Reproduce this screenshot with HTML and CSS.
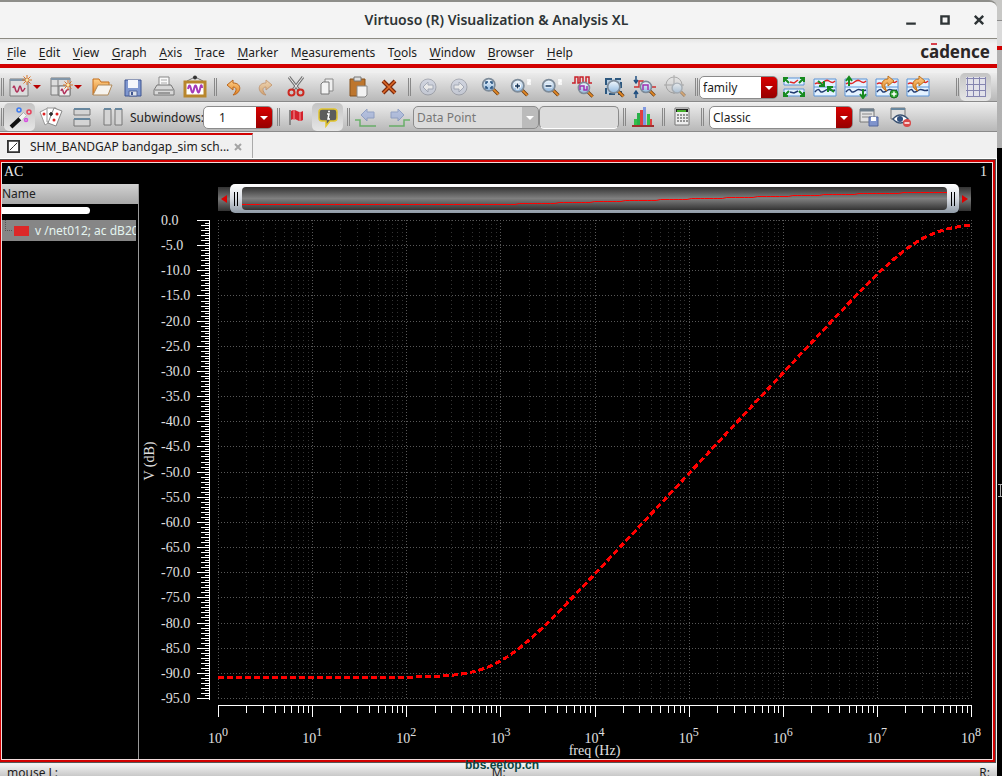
FILE: index.html
```html
<!DOCTYPE html>
<html lang="en">
<head>
<meta charset="UTF-8">
<meta name="viewport" content="width=device-width, initial-scale=1.0">
<title>Virtuoso (R) Visualization &amp; Analysis XL</title>
<link rel="stylesheet" href="styles.css">
</head>
<body>

<svg class="defs" aria-hidden="true">
  <defs>
    <linearGradient id="lens" x1="0" y1="0" x2="0" y2="1"><stop offset="0" stop-color="#f4faff"/><stop offset="1" stop-color="#8fb6dc"/></linearGradient>
    <linearGradient id="gold" x1="0" y1="0" x2="0" y2="1"><stop offset="0" stop-color="#ffd08a"/><stop offset="1" stop-color="#e08020"/></linearGradient>
    <symbol id="magnifier" viewBox="0 0 24 24">
      <path d="M15 15l6 6" stroke="#6b3c10" stroke-width="4"/><path d="M15 15l6 6" stroke="#e48a28" stroke-width="2"/>
      <circle cx="10" cy="10" r="7" fill="url(#lens)" stroke="#7d8b99" stroke-width="2"/>
    </symbol>
    <symbol id="star" viewBox="0 0 10 10">
      <path d="M5 0v10M0 5h10M1.500 1.500l7 7M8.500 1.500l-7 7" stroke="#d9742a"/><circle cx="5" cy="5" r="1.500" fill="#ffe9a0"/>
    </symbol>
    <symbol id="traces" viewBox="0 0 24 24">
      <path d="M1 4h22v17H1z" fill="#e4f2ff" stroke="#5a93d6"/><path d="M1 12h22" stroke="#5a93d6"/>
      <path d="M2 9c3-3 4 1 7-1s4-4 7-2 4 2 6 0" fill="none" stroke="#e02828" stroke-width="1.500"/>
      <path d="M2 17c2-3 4-3 5-1s3 1 6-1 5 2 9 0" fill="none" stroke="#203a70" stroke-width="1.500"/>
    </symbol>
  </defs>
</svg>

<div class="cursor" aria-hidden="true"></div>

<div class="window">
  <header class="titlebar">
    <h1>Virtuoso (R) Visualization &amp; Analysis XL</h1>
    <div class="controls">
      <button aria-label="Minimize"><svg viewBox="0 0 10 10"><path d="M1 8h8" stroke="#2e3436" stroke-width="2"/></svg></button>
      <button aria-label="Maximize"><svg viewBox="0 0 10 10"><path d="M2 2h6v6H2z" fill="none" stroke="#2e3436" stroke-width="2"/></svg></button>
      <button aria-label="Close"><svg viewBox="0 0 10 10"><path d="M1.500 1.500l7 7M8.500 1.500l-7 7" stroke="#2e3436" stroke-width="2"/></svg></button>
    </div>
  </header>

  <div class="menubar">
    <nav>
      <button><u>F</u>ile</button>
      <button><u>E</u>dit</button>
      <button><u>V</u>iew</button>
      <button><u>G</u>raph</button>
      <button><u>A</u>xis</button>
      <button><u>T</u>race</button>
      <button><u>M</u>arker</button>
      <button>M<u>e</u>asurements</button>
      <button>T<u>o</u>ols</button>
      <button><u>W</u>indow</button>
      <button><u>B</u>rowser</button>
      <button><u>H</u>elp</button>
    </nav>
    <span class="brand">c<span class="bar">a</span>dence</span>
  </div>

  <div class="toolbars">
    <div class="toolbar">
      <div class="group">
        <span class="handle"></span>
        <button class="tool split" aria-label="New window">
          <svg viewBox="0 0 24 24"><path d="M2 4h18v17H2z" fill="#dcdcdc" stroke="#7b7b7b"/><path d="M2 5h18" stroke="#8296a8" stroke-width="2"/><path d="M5 13q1-4 2 0t2 4 2-4 2 0 2 3 2-3" fill="none" stroke="#b0305a" stroke-width="1.500"/><use href="#star" x="14" y="0" width="10" height="10"/></svg>
          <i></i>
        </button>
        <button class="tool split" aria-label="New subwindow">
          <svg viewBox="0 0 24 24"><path d="M2 3h19v17H2zM2 11h19M9 3v17" fill="#dcdcdc" stroke="#7b7b7b"/><path d="M2 4h19" stroke="#8296a8" stroke-width="2"/><path d="M10 11h11v10H10z" fill="#eee" stroke="#777"/><path d="M12 16q1-4 2 0t2 2 2-3 2 0" fill="none" stroke="#b0305a" stroke-width="1.500"/><use href="#star" x="14" y="5" width="10" height="10"/></svg>
          <i></i>
        </button>
        <button class="tool" aria-label="Open"><svg viewBox="0 0 24 24"><path d="M3 20V4h6l2 3h8v4" fill="url(#gold)" stroke="#c46d18"/><path d="M3 20l5-10h14l-4 10z" fill="#f6f3ee" stroke="#b08a5a"/></svg></button>
        <button class="tool" aria-label="Save"><svg viewBox="0 0 24 24"><path d="M4 5h16v16H4z" fill="#7f97cf" stroke="#3f5590"/><path d="M7 5h10v8H7z" fill="#f4f6fb"/><path d="M8 16h8v5H8z" fill="#dfe3ea" stroke="#54679c"/><path d="M10 17h2v3h-2z" fill="#3f5590"/></svg></button>
        <button class="tool" aria-label="Print"><svg viewBox="0 0 24 24"><path d="M7 11V2h10v9" fill="#fafafa" stroke="#888"/><path d="M9 5h6M9 8h6" stroke="#aaa"/><path d="M5 10h14l3 5v5H2v-5z" fill="#d8d8d8" stroke="#777"/><path d="M3 15h18" stroke="#777"/><path d="M6 18h12" stroke="#999" stroke-width="2"/></svg></button>
        <button class="tool" aria-label="Save image"><svg viewBox="0 0 24 24"><path d="M4 6l8-4 8 4" fill="none" stroke="#777"/><circle cx="12" cy="2.500" r="2" fill="#333"/><path d="M2 7h20v14H2z" fill="#fff" stroke="#b8862c" stroke-width="3"/><path d="M5 14q1.500-7 3 0t3 0 3 0 3 0 2-1" fill="none" stroke="#a53ab8" stroke-width="2"/></svg></button>
      </div>
      <div class="group">
        <span class="handle"></span>
        <button class="tool" aria-label="Undo"><svg viewBox="0 0 24 24"><path d="M11 5L5 10l6 5v-3c4 0 4 4 0 8 8-1 10-12 0-12z" fill="url(#gold)" stroke="#b9651c"/></svg></button>
        <button class="tool" aria-label="Redo" disabled><svg viewBox="0 0 24 24"><path d="M13 5l6 5-6 5v-3c-4 0-4 4 0 8-8-1-10-12 0-12z" fill="url(#gold)" stroke="#b9651c"/></svg></button>
        <button class="tool" aria-label="Cut"><svg viewBox="0 0 24 24"><path d="M5 2l10 13M19 2L9 15" stroke="#777" stroke-width="3"/><path d="M5 2l10 13M19 2L9 15" stroke="#eee"/><circle cx="7.500" cy="17.500" r="3" fill="none" stroke="#cc2a22" stroke-width="2"/><circle cx="16.500" cy="17.500" r="3" fill="none" stroke="#cc2a22" stroke-width="2"/></svg></button>
        <button class="tool" aria-label="Copy"><svg viewBox="0 0 24 24"><path d="M10 4h8v12h-8z" fill="#eee" stroke="#888"/><path d="M6 9l2-2h6v12H6z" fill="#f2f2f2" stroke="#777"/></svg></button>
        <button class="tool" aria-label="Paste"><svg viewBox="0 0 24 24"><path d="M4 4h15v17H4z" fill="#bd762e" stroke="#84501c"/><path d="M8 2h7v4H8z" fill="#ddd" stroke="#777"/><path d="M11 11h10v9l-2 2h-8z" fill="#f2f2f2" stroke="#888"/></svg></button>
        <button class="tool" aria-label="Delete"><svg viewBox="0 0 24 24"><path d="M6 6l12 12M18 6L6 18" stroke="#7d2a0c" stroke-width="4"/><path d="M6 6l12 12M18 6L6 18" stroke="#e06a28" stroke-width="1.500"/></svg></button>
      </div>
      <div class="group">
        <span class="handle"></span>
        <button class="tool" aria-label="Previous view" disabled><svg viewBox="0 0 24 24"><circle cx="12" cy="12" r="8" fill="#c3cbe0" stroke="#757b8b"/><path d="M12 7l-5 5 5 5v-3h5v-4h-5z" fill="#fff" stroke="#75809a"/></svg></button>
        <button class="tool" aria-label="Next view" disabled><svg viewBox="0 0 24 24"><circle cx="12" cy="12" r="8" fill="#c3cbe0" stroke="#757b8b"/><path d="M12 7l5 5-5 5v-3H7v-4h5z" fill="#fff" stroke="#75809a"/></svg></button>
        <button class="tool" aria-label="Fit"><svg viewBox="0 0 24 24"><use href="#magnifier" x="2" y="1" width="21" height="21"/><path d="M8 9V7h2M12 7h2v2M14 11v2h-2M10 13H8v-2" fill="none" stroke="#24507e" stroke-width="1.500"/></svg></button>
        <button class="tool" aria-label="Zoom in"><svg viewBox="0 0 24 24"><use href="#magnifier" x="0" y="2" width="21" height="21"/><path d="M5 11h7M8.500 7.500v7" stroke="#fff" stroke-width="3"/><path d="M6 11h5M8.500 8.500v5" stroke="#16365a" stroke-width="1.500"/><path d="M18 5h3v2h-2v2h3" fill="none" stroke="#fff" stroke-width="1.500"/></svg></button>
        <button class="tool" aria-label="Zoom out"><svg viewBox="0 0 24 24"><use href="#magnifier" x="0" y="2" width="21" height="21"/><path d="M5 11h7" stroke="#fff" stroke-width="3"/><path d="M5.500 11h6" stroke="#16365a" stroke-width="1.500"/><path d="M18 5h3v2h-2v2h3" fill="none" stroke="#fff" stroke-width="1.500"/></svg></button>
        <button class="tool" aria-label="Zoom X"><svg viewBox="0 0 24 24"><path d="M1 8h3V2h3v6h2V2h3v6h3V2h3v6h3" fill="none" stroke="#c8202a" stroke-width="1.500"/><use href="#magnifier" x="5" y="5" width="19" height="19"/><path d="M9 15v-4h4v4h3v-4" fill="none" stroke="#a030b0" stroke-width="1.500"/></svg></button>
        <button class="tool" aria-label="Zoom area"><svg viewBox="0 0 24 24"><path d="M4 4h15v15H4z" fill="#b8cde0" stroke="#2d587f" stroke-width="2" stroke-dasharray="6 3"/><use href="#magnifier" x="3" y="3" width="21" height="21"/></svg></button>
        <button class="tool" aria-label="Zoom Y"><svg viewBox="0 0 24 24"><path d="M3 1v7M3 23v-7M1 5l2 3 2-3M1 19l2-3 2 3" fill="none" stroke="#204f80" stroke-width="1.500"/><path d="M1 12h5V6h4v6h13" fill="none" stroke="#d03030" stroke-width="1.500"/><use href="#magnifier" x="5" y="4" width="19" height="19"/><path d="M10 15v-5h5v5" fill="none" stroke="#a030b0" stroke-width="1.500"/></svg></button>
        <button class="tool" aria-label="Zoom to point" disabled><svg viewBox="0 0 24 24"><circle cx="10" cy="10" r="8" fill="none" stroke="#777"/><path d="M10 0v19M0 10h20" stroke="#777"/><use href="#magnifier" x="6" y="6" width="17" height="17"/></svg></button>
      </div>
      <div class="group wide">
        <span class="handle"></span>
        <span class="combo family">
          <select aria-label="Strip mode"><option>family</option></select>
        </span>
        <button class="tool" aria-label="Split all strips"><svg viewBox="0 0 24 24"><path d="M2 3h20v7H2zM2 14h20v7H2z" fill="#e4f2ff" stroke="#5a93d6"/><path d="M8 7l4 1 4-3" fill="none" stroke="#e02828" stroke-width="1.500"/><path d="M8 17l4 1 4-2" fill="none" stroke="#203a70" stroke-width="1.500"/><path d="M7 8L2 3m0 4V3h4M17 8l5-5m0 4V3h-4M7 16l-5 5m0-4v4h4M17 16l5 5m0-4v4h-4" fill="none" stroke="#178a20" stroke-width="2"/></svg></button>
        <button class="tool" aria-label="Combine traces"><svg viewBox="0 0 24 24"><use href="#traces" width="24" height="24"/><path d="M5 6l6 5m0-5v5H6M21 17l-6-5m0 5v-5h5" fill="none" stroke="#178a20" stroke-width="2"/></svg></button>
        <button class="tool" aria-label="Swap strips"><svg viewBox="0 0 24 24"><use href="#traces" width="24" height="24"/><path d="M5 11V3M2 6l3-4 3 4M19 14v8M16 19l3 4 3-4" fill="none" stroke="#178a20" stroke-width="2"/></svg></button>
        <button class="tool" aria-label="Add rotated plot"><svg viewBox="0 0 24 24"><use href="#traces" width="24" height="24"/><path d="M13 1l6 5-6 5V8c-4 0-4 4-1 8-7-2-7-12 1-12z" fill="url(#gold)" stroke="#c07018"/><circle cx="19" cy="19" r="4" fill="#2fa52e" stroke="#16701c"/><path d="M16.500 19h5M19 16.500v5" stroke="#fff" stroke-width="1.500"/></svg></button>
        <button class="tool" aria-label="Reload plot"><svg viewBox="0 0 24 24"><use href="#traces" width="24" height="24"/><path d="M13 1l6 5-6 5V8c-4 0-4 4-1 8-7-2-7-12 1-12z" fill="url(#gold)" stroke="#c07018"/></svg></button>
      </div>
      <div class="group last">
        <span class="handle"></span>
        <button class="tool on" aria-label="Toggle grid" aria-pressed="true"><svg viewBox="0 0 24 24"><path d="M2 2h20v20H2z" fill="#e2e2ea"/><path d="M2 3.500h20M2 9.500h20M2 15.500h20M2 21.500h20M3.500 2v20M9.500 2v20M15.500 2v20M21.500 2v20" stroke="#8585b0"/></svg></button>
      </div>
    </div>

    <div class="toolbar">
      <div class="group">
        <span class="handle"></span>
        <button class="tool on" aria-label="Magic wand" aria-pressed="true"><svg viewBox="0 0 24 24"><path d="M3 22L17 9" stroke="#111" stroke-width="4"/><path d="M12 14l5-5" stroke="#f4f4f4" stroke-width="4"/><circle cx="11" cy="5" r="2" fill="none" stroke="#3c7af0" stroke-width="1.500"/><circle cx="21" cy="7" r="2" fill="none" stroke="#e8405a" stroke-width="1.500"/><circle cx="18" cy="15" r="1.500" fill="none" stroke="#d64ce0" stroke-width="1.500"/></svg></button>
        <button class="tool" aria-label="Cards"><svg viewBox="0 0 24 24"><path d="M1 7l8-4 5 12-8 5z" fill="#fff" stroke="#999"/><path d="M8 3h9v14H8z" fill="#fff" stroke="#999"/><path d="M15 3l8 3-6 15-8-3z" fill="#fff" stroke="#888"/><path d="M12 7v4M10 9h4" stroke="#222" stroke-width="1.500"/><circle cx="5" cy="9" r="1.500" fill="#d22"/><circle cx="18" cy="9" r="1.500" fill="#d22"/><circle cx="15" cy="15" r="1.500" fill="#d22"/></svg></button>
        <button class="tool" aria-label="Horizontal split"><svg viewBox="0 0 24 24"><path d="M4 4h16v6H4zM4 14h16v7H4z" fill="#d4d4d4" stroke="#777"/><path d="M4 4h16M4 14h16" stroke="#68879e" stroke-width="2"/></svg></button>
        <button class="tool" aria-label="Vertical split"><svg viewBox="0 0 24 24"><path d="M3 4h7v16H3zM14 4h7v16h-7z" fill="#d4d4d4" stroke="#777"/><path d="M3 4h7M14 4h7" stroke="#68879e" stroke-width="2"/></svg></button>
        <label class="field" for="subwindows">Subwindows:</label>
        <span class="combo count">
          <select id="subwindows"><option>1</option></select>
        </span>
      </div>
      <div class="group">
        <span class="handle"></span>
        <button class="tool" aria-label="Flag"><svg viewBox="0 0 24 24"><path d="M5 5v15" stroke="#888" stroke-width="2"/><path d="M6 6q3-2 6 0t6 0v9q-3 2-6 0t-6 0z" fill="#d3222c"/><path d="M9 5v10M15 7v9" stroke="#ee7076" stroke-width="1.500"/></svg></button>
        <button class="tool on" aria-label="Info balloon" aria-pressed="true"><svg viewBox="0 0 24 24"><path d="M6 4h12q3 0 3 3v6q0 3-3 3h-4l-4 5v-5H6q-3 0-3-3V7q0-3 3-3z" fill="#5c5c5c" stroke="#e2c52c" stroke-width="1.500"/><path d="M11 9h2l-1 5h2" fill="none" stroke="#fff" stroke-width="1.500"/><circle cx="13" cy="6.500" r="1" fill="#fff"/></svg></button>
      </div>
      <div class="group">
        <span class="handle"></span>
        <button class="tool" aria-label="Previous edge" disabled><svg viewBox="0 0 24 24"><path d="M12 4l-6 6 6 6v-3h7V7h-7z" fill="#8ba3de" stroke="#4d6ab0"/><path d="M0 15h5v6h16" fill="none" stroke="#109a10" stroke-width="1.500"/></svg></button>
        <button class="tool" aria-label="Next edge" disabled><svg viewBox="0 0 24 24"><path d="M12 4l6 6-6 6v-3H5V7h7z" fill="#8ba3de" stroke="#4d6ab0"/><path d="M3 21h15v-6h6" fill="none" stroke="#109a10" stroke-width="1.500"/></svg></button>
        <span class="combo point off">
          <select aria-label="Snap to" disabled><option>Data Point</option></select>
        </span>
        <input class="value" type="text" aria-label="Snap value" disabled>
      </div>
      <div class="group">
        <span class="handle"></span>
        <button class="tool" aria-label="Histogram"><svg viewBox="0 0 24 24"><path d="M3 14h3v7H3zM16 9h3v12h-3z" fill="#35c04a"/><path d="M6 8h3v13H6z" fill="#28b04a"/><path d="M9 5h3v16H9zM19 14h2v7h-2z" fill="#e04040"/><path d="M12 2h3v19h-3z" fill="#8098e0"/><path d="M1 21h22" stroke="#a03030" stroke-width="2"/></svg></button>
      </div>
      <div class="group">
        <span class="handle"></span>
        <button class="tool" aria-label="Calculator"><svg viewBox="0 0 24 24"><path d="M5 3h14v17H5z" fill="#eee" stroke="#777"/><path d="M6 4h12v3H6z" fill="#222"/><path d="M7 6h9" stroke="#55e030" stroke-width="1.500"/><path d="M7 10h11M7 13h11M7 16h11" stroke="#777" stroke-width="1.500" stroke-dasharray="2 1"/></svg></button>
      </div>
      <div class="group wide">
        <span class="handle"></span>
        <span class="combo classic">
          <select aria-label="Workspace"><option>Classic</option></select>
        </span>
        <button class="tool" aria-label="Save workspace"><svg viewBox="0 0 24 24"><path d="M3 4h14v13H3z" fill="#e2e2e2" stroke="#777"/><path d="M3 5h14" stroke="#6f7f8c" stroke-width="3"/><path d="M5 9h10M5 12h10" stroke="#888"/><path d="M12 12h9v9h-9z" fill="#7f93cc" stroke="#54679c"/><path d="M14 12h5v4h-5z" fill="#fff"/></svg></button>
        <button class="tool" aria-label="Hide workspace"><svg viewBox="0 0 24 24"><path d="M3 3h14v11H3z" fill="#dedede" stroke="#777"/><path d="M3 4h14" stroke="#68879e" stroke-width="2"/><path d="M5 14q7-8 15 0-8 8-15 0z" fill="#fff" stroke="#3a5272" stroke-width="1.500"/><circle cx="12" cy="14" r="3" fill="#305080"/><circle cx="19" cy="18" r="4" fill="#d84848"/><path d="M16.500 18h5" stroke="#fff" stroke-width="1.500"/></svg></button>
      </div>
    </div>
  </div>

  <div class="tabs">
    <div class="tab">
      <svg viewBox="0 0 14 14"><path d="M1 1h12v12H1z" fill="#fff" stroke="#333" stroke-width="2"/><path d="M3 11l4-4 4-4" fill="none" stroke="#222"/></svg>
      <a href="#plot">SHM_BANDGAP bandgap_sim sch...</a>
      <button aria-label="Close tab"><svg viewBox="0 0 8 8"><path d="M1 1l6 6M7 1L1 7" stroke="#a4a4a4" stroke-width="2"/></svg></button>
    </div>
  </div>

  <main class="frame">
    <div class="caption"><span>AC</span><span>1</span></div>
    <div class="panes">
      <aside class="legend">
        <div class="head">Name</div>
        <div class="strip"></div>
        <div class="entry"><span class="branch"></span><span class="swatch"></span><span>v /net012; ac dB20</span></div>
      </aside>
      <section class="graph">
        <div class="range">
          <span class="end"><i class="left"></i></span>
          <div class="slider">
            <span class="grip"></span>
            <svg class="preview" id="preview"></svg>
            <span class="grip"></span>
          </div>
          <span class="end"><i class="right"></i></span>
        </div>
        <svg class="plot" id="plot"></svg>
      </section>
    </div>
  </main>

  <footer class="status">
    <span>mouse L:</span><span>M:</span><span>R:</span>
    <span class="watermark">bbs.eetop.cn</span>
  </footer>
</div>

<script src="plot.js"></script>
</body>
</html>
```
FILE: styles.css
```css
* {
  box-sizing: border-box;
}

body {
  margin: 0;
  height: 100vh;
  overflow: hidden;
  font-family: "Noto Sans", "Open Sans", sans-serif;
  font-size: 12px;
  color: #1c1c1c;
  background: linear-gradient(#c8c8c6 20px, #8c8c8c 20px, #8c8c8c 21px, #dadada 21px, #dadada 46px, #d00000 46px, #d00000 50px, #b4b4b4 50px, #b0b0b0 148px, #000 148px);
}

button,
select,
input {
  font: inherit;
  color: inherit;
}

button {
  padding: 0;
  border: none;
  background: none;
}

.defs {
  position: absolute;
  width: 0;
  height: 0;
}

.cursor {
  position: absolute;
  right: 0;
  top: 484px;
  width: 4px;
  height: 13px;
  border: 1px solid #aaa;
  border-width: 1px 0;
  background: linear-gradient(#aaa, #aaa) center / 1px 100% no-repeat;
}

.window {
  display: flex;
  flex-direction: column;
  height: 100vh;
  margin-right: 5px;
  border-top: 2px solid #8e8e8a;
  border-top-right-radius: 8px;
  background: #f0f0f0;
  overflow: hidden;
}

/* title and menu */
.titlebar {
  display: flex;
  align-items: center;
  height: 37px;
  padding-right: 10px;
  background: #f4f4f4;
  border-bottom: 1px solid #8c8a82;
}

.titlebar h1 {
  flex: 1;
  margin: 0;
  padding: 0 0 2px 88px;
  font-size: 14px;
  font-weight: 600;
  text-align: center;
  color: #2e3436;
}

.controls {
  display: flex;
  gap: 20px;
}

.controls button {
  width: 14px;
  height: 14px;
}

.controls svg {
  display: block;
  width: 12px;
  height: 12px;
}

.menubar {
  display: flex;
  align-items: center;
  justify-content: space-between;
  height: 25px;
  padding: 1px 7px 0;
  background: linear-gradient(#e6e6e6, #f2f2f2 5px);
}

.menubar nav {
  display: flex;
  flex: 0 1 566px;
  justify-content: space-between;
}

.menubar u {
  text-underline-offset: 2px;
}

.brand {
  font-size: 17px;
  font-weight: 700;
  line-height: 24px;
  color: #2b2626;
}

.brand .bar {
  position: relative;
}

.brand .bar::before {
  content: "";
  position: absolute;
  top: 3px;
  left: 2px;
  width: 6px;
  height: 2px;
  background: #d8404a;
}

/* toolbars */
.toolbars {
  padding-top: 5px;
  border-top: 4px solid #d20000;
}

.toolbar {
  display: flex;
  height: 29px;
  margin-bottom: 1px;
  background: #999;
}

.group {
  display: flex;
  align-items: center;
  background: linear-gradient(#ececec, #b8b8b8);
  border-bottom: 1px solid #8a8a8a;
}

.group.wide {
  flex: 1;
}

.group.last {
  width: 45px;
}

.handle {
  flex: none;
  width: 8px;
  height: 18px;
  background: repeating-linear-gradient(90deg, transparent 0 1px, #888 1px 2px) 3px 0 / 5px 18px no-repeat;
}

.group:first-child .handle {
  width: 4px;
  background-position: 0 0;
}

.tool {
  flex: none;
  width: 31px;
  height: 28px;
  border-radius: 5px;
}

.tool svg {
  display: block;
  width: 24px;
  height: 24px;
  margin: auto;
}

.tool:disabled svg {
  opacity: 0.5;
}

.tool.on {
  background: linear-gradient(#c4c4c4, #e6e6e6);
}

.tool.split {
  display: flex;
  align-items: center;
  width: 41px;
}

.tool.split svg {
  margin: 0 1px 0 4px;
}

.tool.split i,
.end i {
  border: 4px solid transparent;
}

.tool.split i {
  margin-top: 4px;
  border-top-color: #b80000;
}

.field {
  width: 75px;
  padding-left: 2px;
}

.combo {
  position: relative;
  display: flex;
  flex: none;
  height: 23px;
}

.combo select {
  width: 100%;
  padding: 0 3px;
  border: 1px solid #8b8b8b;
  border-radius: 5px;
  appearance: none;
  background: linear-gradient(#d80000, #960000) right / 16px 100% no-repeat #fff;
}

.combo::after {
  content: "";
  position: absolute;
  top: 10px;
  right: 5px;
  border: 4px solid transparent;
  border-top-color: #fff;
}

.combo.off select {
  color: #777;
  opacity: 1;
  background: linear-gradient(#bbb, #bbb) right / 16px 100% no-repeat #dcdcdc;
}

.family {
  width: 79px;
}

.count {
  width: 70px;
}

.count select {
  padding-left: 15px;
}

.point {
  width: 126px;
}

.classic {
  width: 144px;
  margin-left: 4px;
}

.value {
  width: 80px;
  height: 23px;
  border: 1px solid #8b8b8b;
  border-bottom-color: #fff;
  border-radius: 5px;
  background: #dcdcdc;
}

/* tabs */
.tabs {
  display: flex;
  height: 27px;
  border-bottom: 2px solid #fff;
}

.tab {
  display: flex;
  align-items: center;
  width: 253px;
  padding-left: 7px;
  border-top: 2px solid #d20000;
  border-right: 1px solid #aaa;
}

.tab > svg {
  width: 13px;
  height: 13px;
}

.tab a {
  flex: 1;
  margin-left: 10px;
  white-space: nowrap;
  color: inherit;
  text-decoration: none;
}

.tab button {
  width: 18px;
}

.tab button svg {
  display: block;
  width: 8px;
  height: 8px;
}

/* graph window */
.frame {
  display: flex;
  flex: 1;
  flex-direction: column;
  min-height: 0;
  margin-right: 2px;
  border: 2px solid #d20000;
  border-left-width: 1px;
  outline: 1px solid #555;
  color: #e8e8e8;
  background: #000;
  box-shadow: inset 0 0 0 1px #f0dcdc;
}

.caption {
  display: flex;
  justify-content: space-between;
  height: 22px;
  padding: 2px 6px 0 3px;
  font-family: "Liberation Serif", serif;
  font-size: 14px;
}

.panes {
  display: flex;
  flex: 1;
  min-height: 0;
  margin: 0 1px 1px;
}

.legend {
  width: 137px;
  border-right: 1px solid #999;
}

.legend .head {
  height: 20px;
  line-height: 20px;
  color: #222;
  background: linear-gradient(#d2d2d2, #a8a8a8);
}

.legend .strip {
  width: 88px;
  height: 7px;
  margin: 3px 0 6px;
  border-radius: 0 4px 4px 0;
  background: #fff;
}

.legend .entry {
  display: flex;
  align-items: center;
  height: 21px;
  margin-right: 2px;
  overflow: hidden;
  white-space: nowrap;
  color: #e4f4f0;
  background: #868686;
}

.branch {
  flex: none;
  width: 7px;
  height: 11px;
  margin: -10px 2px 0 3px;
  border: 1px dotted #555;
  border-width: 0 0 1px 1px;
}

.swatch {
  flex: none;
  width: 15px;
  height: 10px;
  margin-right: 6px;
  background: #dc2828;
}

.graph {
  display: flex;
  flex: 1;
  flex-direction: column;
  min-width: 0;
}

.range {
  display: flex;
  align-items: center;
  height: 29px;
  margin: 0 21px 0 79px;
}

.end {
  display: flex;
  align-items: center;
  justify-content: center;
  width: 12px;
  height: 24px;
  background: linear-gradient(#333, #777, #333);
}

.end .left {
  margin-right: 4px;
  border-right: 6px solid #d00;
}

.end .right {
  margin-left: 4px;
  border-left: 6px solid #d00;
}

.slider {
  display: flex;
  flex: 1;
  align-items: center;
  height: 29px;
  border-radius: 5px;
  background: linear-gradient(#fff, #d8dce2 50%, #8f9aa6);
}

.grip {
  width: 4px;
  height: 14px;
  margin: 0 4px;
  border: 1px solid #000;
  border-width: 0 1px;
}

.preview {
  flex: 1;
  min-width: 0;
  height: 23px;
  border-radius: 4px;
  background: linear-gradient(#333, #808080, #333);
}

.plot {
  display: block;
  flex: 1;
  width: 100%;
  min-height: 0;
  font-family: "Liberation Serif", serif;
  font-size: 14px;
  fill: #e0e0e0;
}

.plot .exp {
  font-size: 12px;
}

.plot path {
  fill: none;
  shape-rendering: crispEdges;
}

.plot .axis {
  stroke: #fff;
}

.plot .major {
  stroke: #585858;
  stroke-dasharray: 1 2;
}

.plot .minor {
  stroke: #343434;
  stroke-dasharray: 1 3;
}

.plot .trace {
  stroke: #f00;
  stroke-width: 3;
  stroke-dasharray: 6 3;
}

.preview path {
  fill: none;
  stroke: #f00;
  stroke-width: 1;
}

/* status bar */
.status {
  position: relative;
  display: flex;
  justify-content: space-between;
  height: 12px;
  margin-top: 2px;
  padding: 0 7px;
  line-height: 18px;
  background: linear-gradient(#f2f2f2, #c8c8c8);
}

.status span:first-child {
  margin-right: -40px;
}

.watermark {
  position: absolute;
  top: -7px;
  left: 465px;
  line-height: 16px;
  font-family: "Liberation Sans", sans-serif;
  font-weight: 700;
  color: #0b4440;
}
```
FILE: plot.js
```js
const NS = 'http://www.w3.org/2000/svg';
const DECADES = 8;
const FLOOR = -95;

// one zero near 1 kHz, one pole near 31 MHz
function gain(decade) {
  const f = Math.pow(10, decade);
  return -90.9 + 10 * Math.log10(1 + (f / 950) ** 2) - 10 * Math.log10(1 + (f / 3.1e7) ** 2);
}

function add(svg, tag, attrs, text) {
  const el = document.createElementNS(NS, tag);
  for (const key in attrs) el.setAttribute(key, attrs[key]);
  if (text) el.textContent = text;
  svg.appendChild(el);
  return el;
}

function curve(x, y) {
  let d = '';
  for (let i = 0; i <= DECADES * 20; i++) {
    d += (i ? 'L' : 'M') + x(i / 20) + ' ' + y(gain(i / 20));
  }
  return d;
}

function drawPlot() {
  const svg = document.getElementById('plot');
  svg.textContent = '';
  const left = 79;
  const right = svg.clientWidth - 21;
  const top = 7;
  const bottom = svg.clientHeight - 61;
  const x = dec => left + (right - left) * dec / DECADES;
  const y = db => top + (bottom - top) * db / FLOOR;
  const px = n => Math.round(n) + 0.5;

  let major = '';
  let minor = '';
  let axis = `M${left - 9}.5 ${top}V${bottom + 2}M${left} ${bottom + 7}.5H${right + 1}`;

  for (let dec = 0; dec <= DECADES; dec++) {
    major += `M${px(x(dec))} ${top}V${bottom}`;
    axis += `M${px(x(dec))} ${bottom + 7}v12`;
    for (let m = 2; m < 10 && dec < DECADES; m++) {
      const mx = px(x(dec + Math.log10(m)));
      minor += `M${mx} ${top}V${bottom}`;
      axis += `M${mx} ${bottom + 7}v8`;
    }
    const label = add(svg, 'text', { x: x(dec) - 10, y: bottom + 45 }, '10');
    add(label, 'tspan', { class: 'exp', dy: -7 }, String(dec));
  }

  for (let half = 0; half <= 190; half++) {
    const ty = px(y(-half / 2));
    const len = half % 10 === 0 ? 12 : half % 2 === 0 ? 8 : 4;
    axis += `M${left - 9 - len} ${ty}h${len}`;
    if (half % 10 === 0) {
      major += `M${left} ${ty}H${right}`;
      add(svg, 'text', { x: 22, y: ty + 4 }, (half ? '-' : '') + (half / 2).toFixed(1));
    }
  }

  add(svg, 'path', { class: 'minor', d: minor });
  add(svg, 'path', { class: 'major', d: major });
  add(svg, 'path', { class: 'axis', d: axis });
  add(svg, 'path', { class: 'trace', d: curve(x, y) });
  add(svg, 'text', { x: (left + right) / 2, y: bottom + 57, 'text-anchor': 'middle' }, 'freq (Hz)');
  const mid = (top + bottom) / 2 + 2;
  add(svg, 'text', { x: 15, y: mid, 'text-anchor': 'middle', transform: `rotate(-90 15 ${mid})` }, 'V (dB)');
}

function drawPreview() {
  const svg = document.getElementById('preview');
  svg.textContent = '';
  const w = svg.clientWidth;
  add(svg, 'path', { d: curve(dec => w * dec / DECADES, db => Math.round(5 - db * 12 / 90) + 0.5) });
}

function draw() {
  drawPlot();
  drawPreview();
}

window.addEventListener('resize', draw);
draw();
```
